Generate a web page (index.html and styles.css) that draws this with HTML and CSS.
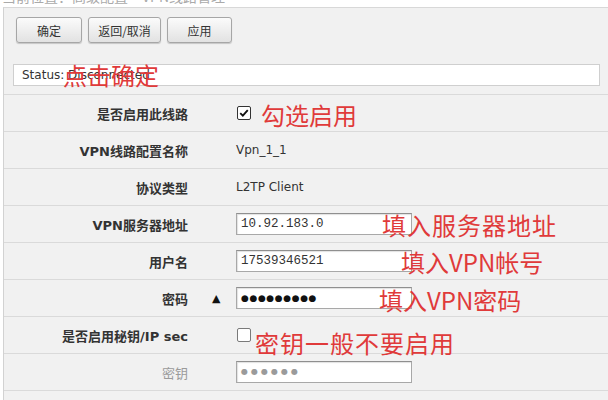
FILE: index.html
```html
<!DOCTYPE html>
<html lang="zh-CN">
<head>
<meta charset="utf-8">
<title>VPN线路配置</title>
<link rel="stylesheet" href="styles.css">
</head>
<body>
<div class="crumb"><span>当前位置：高级配置 &gt; VPN线路管理</span></div>
<div class="panel">
  <div class="toolbar">
    <button class="btn b1">确定</button>
    <button class="btn b2">返回/取消</button>
    <button class="btn b3">应用</button>
  </div>
  <div class="status-wrap">
    <div class="status">Status: Disconnected</div>
  </div>
  <div class="rows">
    <div class="row">
      <div class="lbl">是否启用此线路</div><div class="mid"></div>
      <div class="val"><span class="cb checked"><svg viewBox="0 0 12 12" width="10" height="10"><path d="M1.5 6.2 L4.6 9.2 L10.5 2.5" fill="none" stroke="#111" stroke-width="2.2"/></svg></span></div>
    </div>
    <div class="row">
      <div class="lbl">VPN线路配置名称</div><div class="mid"></div>
      <div class="val txt">Vpn_1_1</div>
    </div>
    <div class="row">
      <div class="lbl">协议类型</div><div class="mid"></div>
      <div class="val txt">L2TP Client</div>
    </div>
    <div class="row">
      <div class="lbl">VPN服务器地址</div><div class="mid"></div>
      <div class="val"><div class="field">10.92.183.0</div></div>
    </div>
    <div class="row">
      <div class="lbl">用户名</div><div class="mid"></div>
      <div class="val"><div class="field">17539346521</div></div>
    </div>
    <div class="row">
      <div class="lbl">密码</div><div class="mid"><span class="arrow">▲</span></div>
      <div class="val"><div class="field pw">●●●●●●●●●</div></div>
    </div>
    <div class="row">
      <div class="lbl">是否启用秘钥/IP sec</div><div class="mid"></div>
      <div class="val"><span class="cb"></span></div>
    </div>
    <div class="row">
      <div class="lbl dim">密钥</div><div class="mid"></div>
      <div class="val"><div class="field pw dimpw">●●●●●●</div></div>
    </div>
    <div class="row"></div>
  </div>
</div>
<div class="note n1">点击确定</div>
<div class="note n2">勾选启用</div>
<div class="note n3">填入服务器地址</div>
<div class="note n4">填入VPN帐号</div>
<div class="note n5">填入VPN密码</div>
<div class="note n6">密钥一般不要启用</div>
</body>
</html>
```
FILE: styles.css
```css
html, body {
  margin: 0;
  padding: 0;
}
body {
  position: relative;
  width: 608px;
  height: 400px;
  overflow: hidden;
  background: #ffffff;
  font-family: "DejaVu Sans", "Noto Sans CJK SC", sans-serif;
  color: #333;
}
.crumb {
  height: 6px;
  overflow: hidden;
  padding-left: 2px;
}
.crumb span {
  display: block;
  margin-top: -12px;
  font-size: 14px;
  line-height: 16px;
  color: #aaa;
  font-family: "Noto Sans CJK SC", sans-serif;
}
.panel {
  margin-left: 3px;
  margin-top: 1px;
  background: #f1f1f1;
  border-left: 1px solid #d2d2d2;
  border-top: 1px solid #d8d8d8;
  height: 392px;
  overflow: hidden;
}
.toolbar {
  display: flex;
  padding: 9px 0 0 12px;
  height: 26px;
}
.btn {
  height: 26px;
  margin: 0 6px 0 0;
  padding: 0;
  border: 1px solid #a6a6a6;
  border-radius: 3px;
  background: linear-gradient(#fbfbfb, #e2e2e2);
  box-shadow: 0 1px 1px rgba(0,0,0,0.18);
  font-family: "Noto Sans CJK SC", sans-serif;
  font-size: 12px;
  color: #333;
}
.b1 { width: 66px; }
.b2 { width: 73px; }
.b3 { width: 65px; }
.status-wrap {
  padding: 21px 8px 8px 9px;
  border-bottom: 1px solid #dadada;
}
.status {
  height: 22px;
  box-sizing: border-box;
  border: 1px solid #cfcfcf;
  background: #fff;
  font-size: 12px;
  line-height: 20px;
  padding-left: 8px;
  color: #333;
}
.rows {
  display: flex;
  flex-direction: column;
}
.row {
  display: grid;
  grid-template-columns: 184px 48px 1fr;
  align-items: center;
  height: 37px;
  flex: none;
  box-sizing: border-box;
  border-bottom: 1px solid #dadada;
}
.lbl {
  text-align: right;
  font-weight: bold;
  font-size: 13px;
  color: #333;
  white-space: nowrap;
}
.lbl.dim {
  font-weight: normal;
  color: #9a9a9a;
}
.mid {
  height: 100%;
  display: flex;
  align-items: center;
}
.arrow {
  margin-left: 24px;
  font-size: 11px;
  color: #111;
}
.val {
  display: flex;
  align-items: center;
}
.txt {
  font-size: 12px;
  color: #333;
}
.cb {
  width: 12px;
  height: 12px;
  border: 1px solid #7a7a7a;
  border-radius: 2px;
  background: #fff;
  display: flex;
  align-items: center;
  justify-content: center;
  margin-left: 1px;
}
.cb.checked {
  border-color: #333;
}
.field {
  width: 176px;
  height: 22px;
  box-sizing: border-box;
  border: 1px solid #a8a8a8;
  border-top-color: #8f8f8f;
  box-shadow: inset 1px 1px 1px rgba(0,0,0,0.12);
  background: #fff;
  font-family: "Liberation Mono", monospace;
  font-size: 12.5px;
  line-height: 20px;
  padding-left: 4px;
  color: #333;
}
.pw {
  font-family: "DejaVu Sans", sans-serif;
  font-size: 9px;
  letter-spacing: 0.6px;
  color: #111;
}
.dimpw {
  color: #9a9a9a;
  font-size: 8px;
  letter-spacing: 3px;
}
.note {
  position: absolute;
  font-family: "Noto Sans CJK SC", sans-serif;
  font-size: 24px;
  line-height: 24px;
  color: #e03a3a;
  white-space: nowrap;
}
.n1 { left: 63px; top: 63px; }
.n2 { left: 261px; top: 103px; }
.n3 { left: 382px; top: 213px; letter-spacing: 1px; }
.n4 { left: 401px; top: 250px; }
.n5 { left: 379px; top: 288px; }
.n6 { left: 255px; top: 331px; letter-spacing: 1px; }
```
